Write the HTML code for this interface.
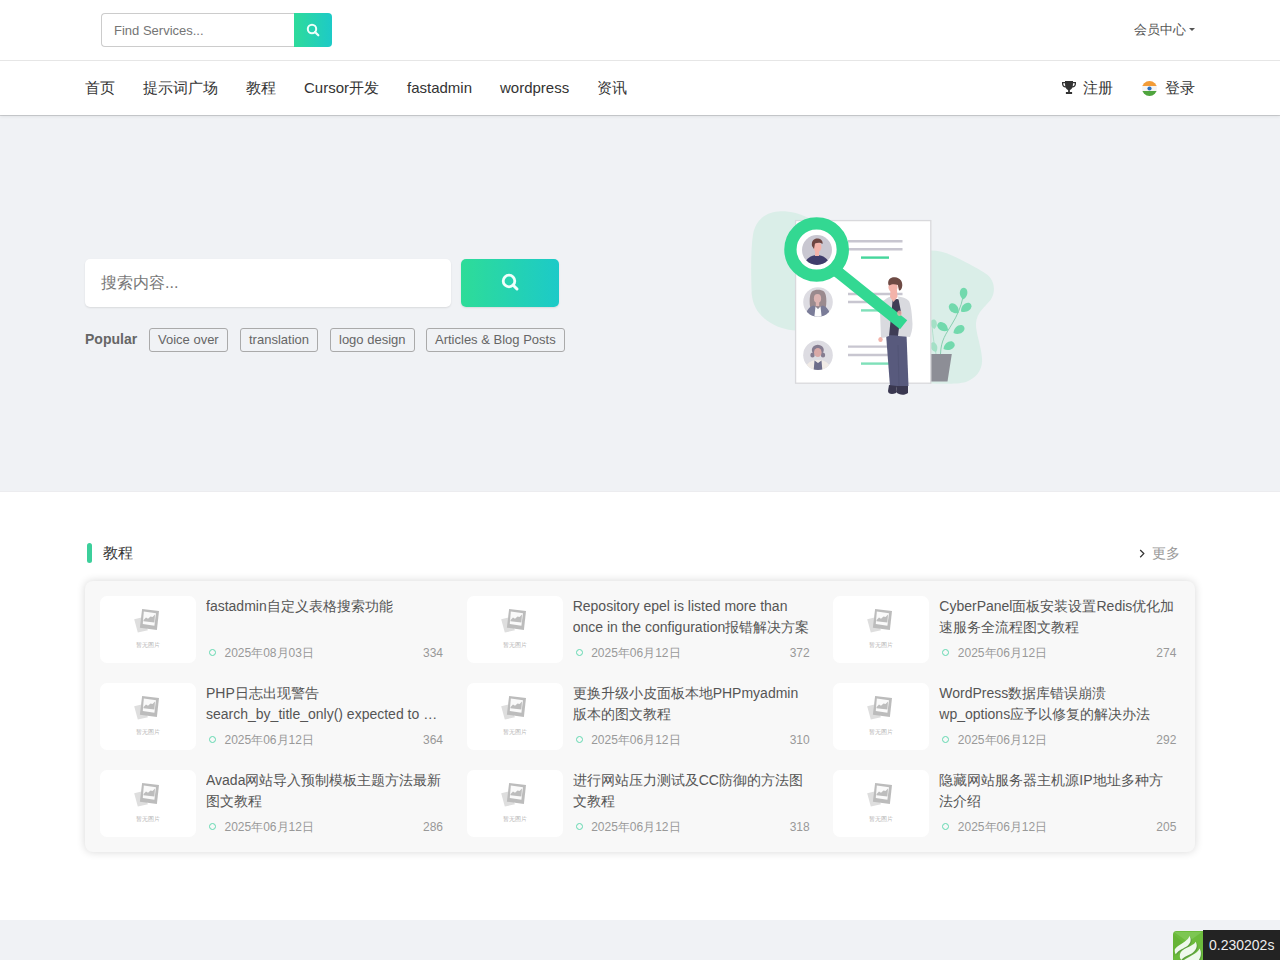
<!DOCTYPE html>
<html><head><meta charset="utf-8">
<style>
*{box-sizing:border-box;margin:0;padding:0}
html,body{width:1280px;height:960px;overflow:hidden;background:#fff;font-family:"Liberation Sans",sans-serif;color:#333}
.abs{position:absolute}
.top{position:absolute;left:0;top:0;width:1280px;height:61px;background:#fff;border-bottom:1px solid #e6e6e6}
.fs{position:absolute;left:101px;top:13px;width:194px;height:34px;border:1px solid #ccc;border-right:none;border-radius:4px 0 0 4px;background:#fff}
.fs span{position:absolute;left:12px;top:9px;font-size:13px;color:#757575;line-height:15px}
.fsb{position:absolute;left:294px;top:13px;width:38px;height:34px;border-radius:0 4px 4px 0;background:linear-gradient(90deg,#2edb9b,#1dcac7)}
.member{position:absolute;left:1134px;top:21px;font-size:13px;color:#555;line-height:17px}
.caret{display:inline-block;width:0;height:0;border-left:3px solid transparent;border-right:3px solid transparent;border-top:3px solid #555;vertical-align:middle;margin-left:3px;position:relative;top:-1px}
.nav{position:absolute;left:0;top:61px;width:1280px;height:54px;background:#fff;box-shadow:0 1px 0 rgba(0,0,0,.14),0 2px 3px rgba(0,0,0,.06);z-index:2}
.nav a{position:absolute;top:18px;font-size:15px;color:#333;text-decoration:none;white-space:nowrap;line-height:18px}
.hero{position:absolute;left:0;top:115px;width:1280px;height:377px;background:#f0f2f5;border-bottom:1px solid #ececef}
.sbox{position:absolute;left:85px;top:259px;width:366px;height:48px;background:#fff;border-radius:5px;box-shadow:0 1px 2px rgba(0,0,0,.10)}
.sbox span{position:absolute;left:16px;top:14px;font-size:16px;color:#777;line-height:19px}
.sbtn{position:absolute;left:461px;top:259px;width:98px;height:48px;border-radius:5px;background:linear-gradient(90deg,#2edc98,#1ccac8);box-shadow:0 1px 2px rgba(0,0,0,.10)}
.pop{position:absolute;left:85px;top:331px;font-size:14px;font-weight:bold;color:#666;line-height:16px}
.tag{position:absolute;top:328px;height:24px;border:1px solid #aaa;border-radius:3px;font-size:13px;color:#666;padding:0 8px;line-height:22px;white-space:nowrap}
.main{position:absolute;left:0;top:492px;width:1280px;height:428px;background:#fff}
.foot{position:absolute;left:0;top:920px;width:1280px;height:40px;background:#f0f2f5}
.bar{position:absolute;left:87px;top:543px;width:5px;height:20px;border-radius:3px;background:#3ccf9b}
.h2{position:absolute;left:103px;top:544px;font-size:15px;color:#333;line-height:17px}
.more{position:absolute;left:1152px;top:545px;font-size:14px;color:#999;line-height:16px}
.card{position:absolute;left:85px;top:581px;width:1110px;height:271px;background:#f8f8f8;border-radius:8px;box-shadow:0 0 8px rgba(0,0,0,.16)}
.it{position:absolute;width:346.67px;height:67px}
.th{position:absolute;left:0;top:0;width:96px;height:67px;background:#fff;border-radius:7px}
.th svg{position:absolute;left:0;top:0}
.tt{position:absolute;left:106px;top:0;width:236.9px;font-size:14px;line-height:21px;color:#555;display:-webkit-box;-webkit-line-clamp:2;-webkit-box-orient:vertical;overflow:hidden;word-break:normal}
.mt{position:absolute;left:106px;top:50px;width:237px;height:14px;font-size:12px;line-height:14px;color:#999}
.mt i{position:absolute;left:3px;top:3px;width:7px;height:7px;border:1.4px solid #62d8b0;border-radius:50%}
.mt .d{position:absolute;left:18.5px;top:0}
.mt .n{position:absolute;right:0;top:0}
.trace{position:absolute;left:1203px;top:930px;width:77px;height:30px;background:#232323;color:#eee;font-size:14px;line-height:30px;padding-left:6px}
</style></head><body>
<div class="top">
  <div class="fs"><span>Find Services...</span></div>
  <div class="fsb"><svg width="38" height="34" viewBox="0 0 38 34"><circle cx="18" cy="16" r="4.2" fill="none" stroke="#effffb" stroke-width="2"/><line x1="21" y1="19" x2="24.3" y2="22.3" stroke="#effffb" stroke-width="2.2" stroke-linecap="round"/></svg></div>
  <div class="member">会员中心<i class="caret"></i></div>
</div>
<div class="nav">
  <a style="left:85px">首页</a>
  <a style="left:143px">提示词广场</a>
  <a style="left:246px">教程</a>
  <a style="left:304px">Cursor开发</a>
  <a style="left:407px">fastadmin</a>
  <a style="left:500px">wordpress</a>
  <a style="left:597px">资讯</a>
  <svg class="abs" style="left:1061px;top:19px" width="16" height="15" viewBox="0 0 16 15">
    <path d="M4 1h8v1h3v2c0 2-1.5 3.3-3.6 3.6C10.7 9 9.6 9.8 8.9 10v2h2.2v2H4.9v-2h2.2v-2C6.4 9.8 5.3 9 4.6 7.6 2.5 7.3 1 6 1 4V2h3zM2.3 3.3v.7c0 1.2.8 2.1 2 2.3C4.1 5.5 4 4.4 4 3.3zM13.7 3.3H12c0 1.1-.1 2.2-.3 3 1.2-.2 2-1.1 2-2.3z" fill="#333"/>
  </svg>
  <a style="left:1083px">注册</a>
  <svg class="abs" style="left:1141px;top:19px" width="17" height="17" viewBox="0 0 17 17">
    <defs><clipPath id="cc"><circle cx="8.5" cy="8.5" r="7.6"/></clipPath></defs>
    <g clip-path="url(#cc)"><rect x="0" y="0" width="17" height="6" fill="#f29c38"/><rect x="0" y="6" width="17" height="5" fill="#f4f4f4"/><rect x="0" y="11" width="17" height="6" fill="#4fa43e"/></g>
    <circle cx="8.5" cy="8.5" r="2.1" fill="#2c6fbf"/>
  </svg>
  <a style="left:1165px">登录</a>
</div>
<div class="hero"></div>
<div class="sbox"><span>搜索内容...</span></div>
<div class="sbtn"><svg width="98" height="48" viewBox="0 0 98 48"><circle cx="48" cy="22" r="5.8" fill="none" stroke="#f0fffc" stroke-width="2.8"/><line x1="52.2" y1="26.2" x2="56" y2="30" stroke="#f0fffc" stroke-width="3" stroke-linecap="round"/></svg></div>
<div class="pop">Popular</div>
<div class="tag" style="left:149px">Voice over</div>
<div class="tag" style="left:240px">translation</div>
<div class="tag" style="left:330px">logo design</div>
<div class="tag" style="left:426px">Articles &amp; Blog Posts</div>

<svg class="abs" style="left:740px;top:195px" width="270" height="215" viewBox="740 195 270 215">
<path d="M781 211.3C768 211.5 757 218 753.5 232C750.5 246 751 276 751.7 294C753 306 758 314 767 320.5C776 327 786 330 796 330.5L812 330L812 220C800 213 790 211.2 781 211.3Z" fill="#daeee8"/>
<path d="M928 250.5C936 250 944 251.5 952 255.5C962 260 975 266.5 987 274.5C995 281 996 292 990.5 300C985 307 977 312 976 323C975.5 333 981 345 982 358C983 369 977 378 966 382C958 384 948 384 928 383.5Z" fill="#daeee8"/>
<g>
<path d="M940.5 354C941 340 946 334 952 324C957 316 961 307 963 297" fill="none" stroke="#7fcaa9" stroke-width="0.9"/>
<path d="M936 354C934 344 933 336 932 326" fill="none" stroke="#a9dcc6" stroke-width="0.8"/>
<g fill="#72d9ad"><path d="M0 0C-3.8-2.5-4.2-7.5-1.8-9.6C-0.8-10.4 0.8-10.4 1.8-9.6C4.2-7.5 3.8-2.5 0 0Z" transform="translate(963 299.5) rotate(5) scale(1.15)"/><path d="M0 0C-3.8-2.5-4.2-7.5-1.8-9.6C-0.8-10.4 0.8-10.4 1.8-9.6C4.2-7.5 3.8-2.5 0 0Z" transform="translate(958.5 313) rotate(-45) scale(1.2)"/><path d="M0 0C-3.8-2.5-4.2-7.5-1.8-9.6C-0.8-10.4 0.8-10.4 1.8-9.6C4.2-7.5 3.8-2.5 0 0Z" transform="translate(961 311.5) rotate(53) scale(1.2)"/><path d="M0 0C-3.8-2.5-4.2-7.5-1.8-9.6C-0.8-10.4 0.8-10.4 1.8-9.6C4.2-7.5 3.8-2.5 0 0Z" transform="translate(948 330.5) rotate(-56) scale(1.2)"/><path d="M0 0C-3.8-2.5-4.2-7.5-1.8-9.6C-0.8-10.4 0.8-10.4 1.8-9.6C4.2-7.5 3.8-2.5 0 0Z" transform="translate(953.5 333) rotate(59) scale(1.2)"/><path d="M0 0C-3.8-2.5-4.2-7.5-1.8-9.6C-0.8-10.4 0.8-10.4 1.8-9.6C4.2-7.5 3.8-2.5 0 0Z" transform="translate(943.5 349) rotate(62) scale(1.2)"/></g>
<g fill="#a4e0c6"><path d="M0 0C-3.8-2.5-4.2-7.5-1.8-9.6C-0.8-10.4 0.8-10.4 1.8-9.6C4.2-7.5 3.8-2.5 0 0Z" transform="translate(934.5 329) rotate(-8) scale(0.95)"/><path d="M0 0C-3.8-2.5-4.2-7.5-1.8-9.6C-0.8-10.4 0.8-10.4 1.8-9.6C4.2-7.5 3.8-2.5 0 0Z" transform="translate(936 352) rotate(-22) scale(1.0)"/></g>
<path d="M929 354H951.8L947.5 381.5H929Z" fill="#8d8e96"/>
</g>
<rect x="795.6" y="220.6" width="135.2" height="162.6" fill="#fff" stroke="#d9d9dc" stroke-width="1.3"/>
<g stroke="#c8c6d0" stroke-width="2.4">
<line x1="848" y1="241.2" x2="902.5" y2="241.2"/><line x1="848" y1="249.3" x2="902.5" y2="249.3"/>
<line x1="848" y1="294" x2="902.5" y2="294"/><line x1="848" y1="302" x2="902.5" y2="302"/>
<line x1="848" y1="346.6" x2="902.5" y2="346.6"/><line x1="848" y1="355" x2="902.5" y2="355"/>
</g>
<g stroke="#45d69c" stroke-width="2.4">
<line x1="861" y1="257.6" x2="889" y2="257.6"/><line x1="861" y1="310.4" x2="889" y2="310.4" stroke="#7fe0b9"/><line x1="861" y1="363.6" x2="889" y2="363.6" stroke="#7fe0b9"/>
</g>
<!-- avatar 2 -->
<circle cx="818" cy="302" r="14.8" fill="#dddce2"/>
<clipPath id="av2"><circle cx="818" cy="302" r="14.8"/></clipPath>
<g clip-path="url(#av2)">
<path d="M810.5 309C809 302 809.5 294 812 291.5C815 289 821 289 824 291.5C826.5 294 827 302 825.5 309Z" fill="#9a8a8e"/>
<ellipse cx="817.5" cy="298.5" rx="3.6" ry="4.4" fill="#dcb4b2"/>
<rect x="815.8" y="302" width="3.4" height="4" fill="#dcb4b2"/>
<path d="M805 320C805 312 809 306.5 813.5 305.5L818 308L822.5 305.5C827 306.5 831 312 831 320Z" fill="#7a7c98"/>
<path d="M814 320L815.5 306.5L818 309L820.5 306.5L822 320Z" fill="#fbfbfb"/>
</g>
<!-- avatar 3 -->
<circle cx="818" cy="355.3" r="14.8" fill="#dddce2"/>
<clipPath id="av3"><circle cx="818" cy="355.3" r="14.8"/></clipPath>
<g clip-path="url(#av3)">
<ellipse cx="817.8" cy="350" rx="6" ry="5.2" fill="#857c90"/>
<ellipse cx="812.5" cy="355" rx="2.2" ry="2.6" fill="#857c90"/>
<ellipse cx="823" cy="355" rx="2.2" ry="2.6" fill="#857c90"/>
<ellipse cx="817.8" cy="352.5" rx="3.8" ry="4.6" fill="#d9a9a7"/>
<path d="M805 372C805 364 810 360 818 360C826 360 831 364 831 372Z" fill="#f1ebe6"/>
<path d="M813.5 372L814.5 360.5L818 363L821.5 360.5L822.5 372Z" fill="#6e6e8a"/>
</g>
<!-- magnifier ring + avatar 1 -->
<circle cx="816.6" cy="249.5" r="20.5" fill="#fff"/>
<circle cx="817" cy="250" r="15" fill="#c9c7d1"/>
<clipPath id="av1"><circle cx="817" cy="250" r="15"/></clipPath>
<g clip-path="url(#av1)">
<path d="M804 268C804 260 810 255 817 255C824 255 830 260 830 268Z" fill="#3f3d6b"/>
<rect x="815" y="251" width="4" height="5" fill="#f3b3aa"/>
<ellipse cx="817.5" cy="247" rx="4" ry="4.8" fill="#f3b3aa"/>
<path d="M812 246C811 240 815 238 818 238.5C822 239 823 242 822.5 244C820 242 817 243 815 243.5L814 249Z" fill="#6e4540"/>
</g>
<circle cx="816.6" cy="249.5" r="26.2" fill="none" stroke="#33d892" stroke-width="12.3"/>
<!-- person -->
<path d="M886 334L906.5 334L908.5 386L890 386.5Z" fill="#585a7d"/><path d="M898 345L899 386" stroke="#4d5070" stroke-width="0.6"/>
<path d="M889 385L897 386L896 393C892 395 888 394 888 391Z" fill="#3a3850"/>
<path d="M897 386L908 386L908 393C904 396 899 395 896 392Z" fill="#3a3850"/>
<path d="M886 301L897 299L906 301L906.5 336L887 335Z" fill="#3f3d56"/>
<path d="M884.5 300C887 297.5 890 296.5 893 296.5L889 336C886 337 883 338 881 338L880 311C880 305 882 302 884.5 300Z" fill="#d9dadf"/>
<path d="M898 296.5C902 297 906 298 909 301C911 305 912 314 912.5 324C912.5 330 911 334 910 337L898 336L901 312Z" fill="#d9dadf"/>
<ellipse cx="880.5" cy="339.5" rx="2.2" ry="2.6" fill="#f3b3aa"/>
<path d="M890.5 290L897 290L897.5 297L893.5 302L890 297Z" fill="#f3b3aa"/>
<ellipse cx="893" cy="287" rx="4.6" ry="5.4" fill="#f3b3aa"/>
<path d="M888.3 284.5C887.5 279 891 276.8 895 277.2C900 277.8 902.5 281 902.3 285.5C902 289 900.5 290.8 899 290.5L897.8 285C895.5 284 892 283.5 889.3 285.5Z" fill="#6e4a44"/>
<!-- handle -->
<path d="M836 270.5L903.6 324.8" stroke="#33d892" stroke-width="11.5" stroke-linecap="butt"/>
<circle cx="838" cy="272" r="5.75" fill="#33d892"/>
<ellipse cx="899.5" cy="313.3" rx="2.3" ry="2.7" fill="#f3b3aa" opacity="0.8"/>
</svg>


<div class="main"></div>
<div class="bar"></div>
<div class="h2">教程</div>
<svg class="abs" style="left:1138px;top:548px" width="8" height="11" viewBox="0 0 8 11"><path d="M2.2 2l3.6 3.6-3.6 3.6" fill="none" stroke="#333" stroke-width="1.25"/></svg>
<div class="more">更多</div>
<div class="card">
<div class="it" style="left:15.00px;top:15px"><div class="th"><svg width="96" height="67" viewBox="0 0 96 67"><polygon points="34.2,23.2 41.5,21.5 48,34.2 37.8,36.6" fill="#dedede"/><polygon points="42.1,12.9 59,15.1 56.9,34 39.9,31.7" fill="#bcbcbc"/><polygon points="43.8,15.4 56,17.2 54.4,29.8 42.8,28" fill="#fafafa"/><polygon points="43.6,24 46,21.5 48,22.8 50.5,20.5 52.5,21 55,18.5 54.4,26.6 43.4,25.3" fill="#bdbdbd"/><text x="47.8" y="51" font-size="6.2" fill="#b3b3b3" text-anchor="middle">暂无图片</text></svg></div><div class="tt">fastadmin自定义表格搜索功能</div><div class="mt"><i></i><span class="d">2025年08月03日</span><span class="n">334</span></div></div>
<div class="it" style="left:381.67px;top:15px"><div class="th"><svg width="96" height="67" viewBox="0 0 96 67"><polygon points="34.2,23.2 41.5,21.5 48,34.2 37.8,36.6" fill="#dedede"/><polygon points="42.1,12.9 59,15.1 56.9,34 39.9,31.7" fill="#bcbcbc"/><polygon points="43.8,15.4 56,17.2 54.4,29.8 42.8,28" fill="#fafafa"/><polygon points="43.6,24 46,21.5 48,22.8 50.5,20.5 52.5,21 55,18.5 54.4,26.6 43.4,25.3" fill="#bdbdbd"/><text x="47.8" y="51" font-size="6.2" fill="#b3b3b3" text-anchor="middle">暂无图片</text></svg></div><div class="tt">Repository epel is listed more than once in the configuration报错解决方案</div><div class="mt"><i></i><span class="d">2025年06月12日</span><span class="n">372</span></div></div>
<div class="it" style="left:748.33px;top:15px"><div class="th"><svg width="96" height="67" viewBox="0 0 96 67"><polygon points="34.2,23.2 41.5,21.5 48,34.2 37.8,36.6" fill="#dedede"/><polygon points="42.1,12.9 59,15.1 56.9,34 39.9,31.7" fill="#bcbcbc"/><polygon points="43.8,15.4 56,17.2 54.4,29.8 42.8,28" fill="#fafafa"/><polygon points="43.6,24 46,21.5 48,22.8 50.5,20.5 52.5,21 55,18.5 54.4,26.6 43.4,25.3" fill="#bdbdbd"/><text x="47.8" y="51" font-size="6.2" fill="#b3b3b3" text-anchor="middle">暂无图片</text></svg></div><div class="tt">CyberPanel面板安装设置Redis优化加速服务全流程图文教程</div><div class="mt"><i></i><span class="d">2025年06月12日</span><span class="n">274</span></div></div>
<div class="it" style="left:15.00px;top:102px"><div class="th"><svg width="96" height="67" viewBox="0 0 96 67"><polygon points="34.2,23.2 41.5,21.5 48,34.2 37.8,36.6" fill="#dedede"/><polygon points="42.1,12.9 59,15.1 56.9,34 39.9,31.7" fill="#bcbcbc"/><polygon points="43.8,15.4 56,17.2 54.4,29.8 42.8,28" fill="#fafafa"/><polygon points="43.6,24 46,21.5 48,22.8 50.5,20.5 52.5,21 55,18.5 54.4,26.6 43.4,25.3" fill="#bdbdbd"/><text x="47.8" y="51" font-size="6.2" fill="#b3b3b3" text-anchor="middle">暂无图片</text></svg></div><div class="tt">PHP日志出现警告 search_by_title_only() expected to be a reference, value given</div><div class="mt"><i></i><span class="d">2025年06月12日</span><span class="n">364</span></div></div>
<div class="it" style="left:381.67px;top:102px"><div class="th"><svg width="96" height="67" viewBox="0 0 96 67"><polygon points="34.2,23.2 41.5,21.5 48,34.2 37.8,36.6" fill="#dedede"/><polygon points="42.1,12.9 59,15.1 56.9,34 39.9,31.7" fill="#bcbcbc"/><polygon points="43.8,15.4 56,17.2 54.4,29.8 42.8,28" fill="#fafafa"/><polygon points="43.6,24 46,21.5 48,22.8 50.5,20.5 52.5,21 55,18.5 54.4,26.6 43.4,25.3" fill="#bdbdbd"/><text x="47.8" y="51" font-size="6.2" fill="#b3b3b3" text-anchor="middle">暂无图片</text></svg></div><div class="tt">更换升级小皮面板本地PHPmyadmin版本的图文教程</div><div class="mt"><i></i><span class="d">2025年06月12日</span><span class="n">310</span></div></div>
<div class="it" style="left:748.33px;top:102px"><div class="th"><svg width="96" height="67" viewBox="0 0 96 67"><polygon points="34.2,23.2 41.5,21.5 48,34.2 37.8,36.6" fill="#dedede"/><polygon points="42.1,12.9 59,15.1 56.9,34 39.9,31.7" fill="#bcbcbc"/><polygon points="43.8,15.4 56,17.2 54.4,29.8 42.8,28" fill="#fafafa"/><polygon points="43.6,24 46,21.5 48,22.8 50.5,20.5 52.5,21 55,18.5 54.4,26.6 43.4,25.3" fill="#bdbdbd"/><text x="47.8" y="51" font-size="6.2" fill="#b3b3b3" text-anchor="middle">暂无图片</text></svg></div><div class="tt">WordPress数据库错误崩溃 wp_options应予以修复的解决办法</div><div class="mt"><i></i><span class="d">2025年06月12日</span><span class="n">292</span></div></div>
<div class="it" style="left:15.00px;top:189px"><div class="th"><svg width="96" height="67" viewBox="0 0 96 67"><polygon points="34.2,23.2 41.5,21.5 48,34.2 37.8,36.6" fill="#dedede"/><polygon points="42.1,12.9 59,15.1 56.9,34 39.9,31.7" fill="#bcbcbc"/><polygon points="43.8,15.4 56,17.2 54.4,29.8 42.8,28" fill="#fafafa"/><polygon points="43.6,24 46,21.5 48,22.8 50.5,20.5 52.5,21 55,18.5 54.4,26.6 43.4,25.3" fill="#bdbdbd"/><text x="47.8" y="51" font-size="6.2" fill="#b3b3b3" text-anchor="middle">暂无图片</text></svg></div><div class="tt">Avada网站导入预制模板主题方法最新图文教程</div><div class="mt"><i></i><span class="d">2025年06月12日</span><span class="n">286</span></div></div>
<div class="it" style="left:381.67px;top:189px"><div class="th"><svg width="96" height="67" viewBox="0 0 96 67"><polygon points="34.2,23.2 41.5,21.5 48,34.2 37.8,36.6" fill="#dedede"/><polygon points="42.1,12.9 59,15.1 56.9,34 39.9,31.7" fill="#bcbcbc"/><polygon points="43.8,15.4 56,17.2 54.4,29.8 42.8,28" fill="#fafafa"/><polygon points="43.6,24 46,21.5 48,22.8 50.5,20.5 52.5,21 55,18.5 54.4,26.6 43.4,25.3" fill="#bdbdbd"/><text x="47.8" y="51" font-size="6.2" fill="#b3b3b3" text-anchor="middle">暂无图片</text></svg></div><div class="tt">进行网站压力测试及CC防御的方法图文教程</div><div class="mt"><i></i><span class="d">2025年06月12日</span><span class="n">318</span></div></div>
<div class="it" style="left:748.33px;top:189px"><div class="th"><svg width="96" height="67" viewBox="0 0 96 67"><polygon points="34.2,23.2 41.5,21.5 48,34.2 37.8,36.6" fill="#dedede"/><polygon points="42.1,12.9 59,15.1 56.9,34 39.9,31.7" fill="#bcbcbc"/><polygon points="43.8,15.4 56,17.2 54.4,29.8 42.8,28" fill="#fafafa"/><polygon points="43.6,24 46,21.5 48,22.8 50.5,20.5 52.5,21 55,18.5 54.4,26.6 43.4,25.3" fill="#bdbdbd"/><text x="47.8" y="51" font-size="6.2" fill="#b3b3b3" text-anchor="middle">暂无图片</text></svg></div><div class="tt">隐藏网站服务器主机源IP地址多种方法介绍</div><div class="mt"><i></i><span class="d">2025年06月12日</span><span class="n">205</span></div></div>
</div>
<div class="foot"></div>
<svg class="abs" style="left:1173px;top:931px" width="30" height="29" viewBox="0 0 30 29">
<path d="M3.5 0H30V29H0V3.5A3.5 3.5 0 0 1 3.5 0Z" fill="#6cbb3c"/>
<path d="M1 1L15 11L29 1Z" fill="#7dc653"/>
<path d="M0 3L12 13L0 27Z" fill="#66b436"/>
<g fill="#5c9d3e"><path d="M17.5 6.1C19.5 9 19 13 15.7 15.7C12 18.5 7 19.5 3.7 24.2L3 21C5 16 9 14.5 12.9 11.5Z"/><path d="M23.5 11.8C25.5 14.5 25.5 19 20.7 22.8C17 25.5 12 26.5 9.3 30L8 28C9 24 13 21 18.9 15.7Z"/><path d="M27.4 18.6C29.5 21 29.5 26 27 30L12 30C15 28 19 26 23 23.5Z"/></g>
<g fill="#eef8ec"><path d="M16.5 5.1C18.5 8 18 12 14.7 14.7C11 17.5 6 18.5 2.7 23.2C1.5 21 1.5 18.5 2 17.9C4 15 8 13.5 11.9 10.5C14.5 8.5 16 7 16.5 5.1Z"/><path d="M22.5 10.8C24.5 13.5 24.5 18 19.7 21.8C16 24.5 11 25.5 8.3 29L7 27C6.5 24 7 21.5 9 19.7C12 17 16 16 17.9 14.7C20 13.5 22 12.5 22.5 10.8Z"/><path d="M26.4 17.6C28.5 20 28.5 25 26 29L11 29C14 27 18 25 22 22.5C24.5 21 26 19.5 26.4 17.6Z"/></g>
</svg>
<div class="trace">0.230202s</div>
</body></html>
